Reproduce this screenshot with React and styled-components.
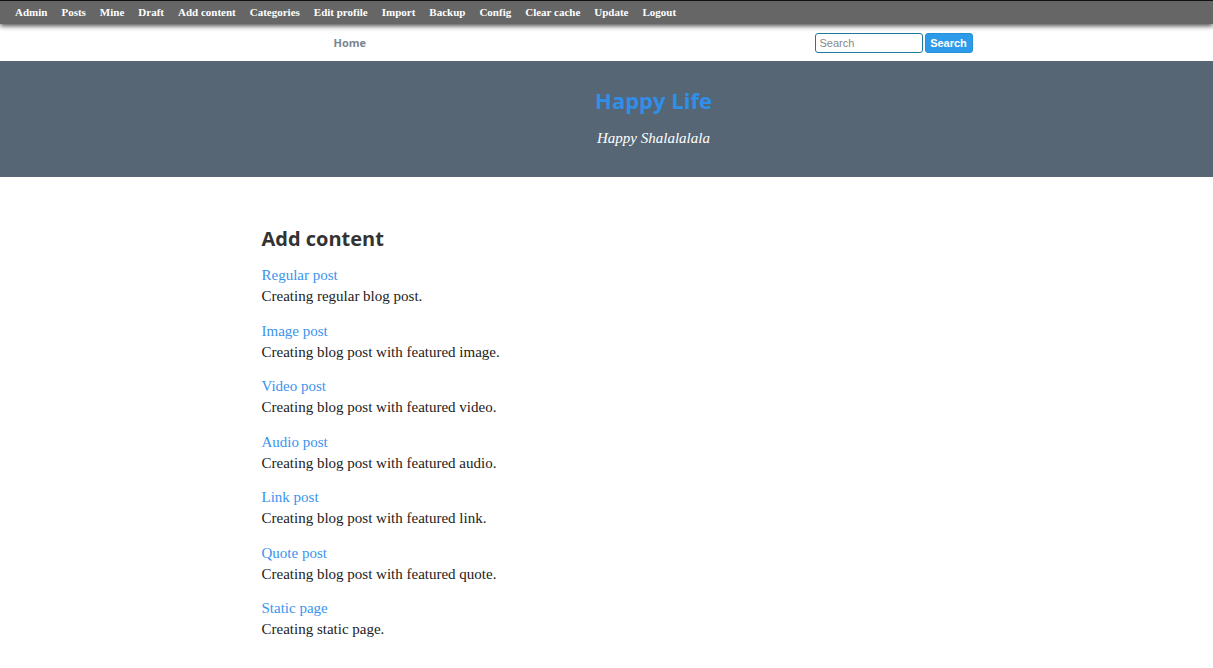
import React from "react";
import styled, { createGlobalStyle } from "styled-components";

const Global = createGlobalStyle`
  html, body { margin: 0; padding: 0; background: #fff; }
  body { font-family: "Liberation Serif", Georgia, serif; }
`;

const TopBar = styled.div`
  height: 24px;
  box-sizing: border-box;
  padding-bottom: 2px;
  border-top: 1px solid #111;
  background: #666;
  box-shadow: 0 2px 5px rgba(0,0,0,0.7);
  display: flex;
  align-items: center;
  gap: 14px;
  padding-left: 15px;
  position: relative;
  z-index: 2;
`;

const TopLink = styled.a`
  font-family: "Liberation Serif", Georgia, serif;
  font-weight: bold;
  font-size: 11px;
  color: #fff;
  text-decoration: none;
  white-space: nowrap;
`;

const NavBar = styled.div`
  height: 37px;
  background: #fff;
`;

const NavInner = styled.div`
  width: 639px;
  margin-left: calc(50% - 273px);
  height: 100%;
  display: flex;
  align-items: center;
  justify-content: space-between;
`;

const NavLink = styled.a`
  font-family: "Open Sans", sans-serif;
  font-weight: bold;
  font-size: 11px;
  color: #7a8590;
  text-decoration: none;
`;

const SearchForm = styled.form`
  display: flex;
  gap: 2px;
  margin: 0;
`;

const SearchInput = styled.input`
  box-sizing: border-box;
  width: 108px;
  height: 20px;
  border: 1px solid #1c7a9c;
  border-radius: 3px;
  padding: 0 4px;
  font-family: "Liberation Sans", Arial, sans-serif;
  font-size: 11px;
  color: #333;
  outline: none;
  &::placeholder { color: #888; }
`;

const SearchButton = styled.button`
  box-sizing: border-box;
  width: 48px;
  height: 20px;
  border: 1px solid #2590d8;
  border-radius: 3px;
  background: #2d9be9;
  color: #fff;
  font-family: "Liberation Sans", Arial, sans-serif;
  font-weight: bold;
  font-size: 11px;
  padding: 0;
`;

const Header = styled.header`
  height: 116px;
  background: #566675;
  display: flex;
  flex-direction: column;
  align-items: center;
  padding-left: 94px;
  box-sizing: border-box;
  padding-top: 24px;
`;

const SiteTitle = styled.h1`
  margin: 0;
  font-family: "Open Sans", sans-serif;
  font-weight: bold;
  font-size: 22px;
  line-height: 30px;
  color: #2f8fea;
`;

const SiteTagline = styled.p`
  margin: 13px 0 0;
  font-family: "Liberation Serif", Georgia, serif;
  font-style: italic;
  font-size: 15px;
  line-height: 20px;
  color: #fff;
`;

const Main = styled.main`
  width: 690px;
  margin: 0 auto;
  padding-top: 48px;
`;

const PageTitle = styled.h2`
  margin: 0 0 12px;
  font-family: "Open Sans", sans-serif;
  font-weight: bold;
  font-size: 20px;
  line-height: 28px;
  color: #333;
`;

const Item = styled.div`
  margin-bottom: 13.5px;
`;

const ItemLink = styled.a`
  display: block;
  font-family: "Liberation Serif", Georgia, serif;
  font-size: 15px;
  line-height: 21px;
  color: #3a94ee;
  text-decoration: none;
`;

const ItemDesc = styled.div`
  font-family: "Liberation Serif", Georgia, serif;
  font-size: 15px;
  line-height: 21px;
  color: #222;
`;

const menu = ["Admin", "Posts", "Mine", "Draft", "Add content", "Categories", "Edit profile", "Import", "Backup", "Config", "Clear cache", "Update", "Logout"];

const items = [
  ["Regular post", "Creating regular blog post."],
  ["Image post", "Creating blog post with featured image."],
  ["Video post", "Creating blog post with featured video."],
  ["Audio post", "Creating blog post with featured audio."],
  ["Link post", "Creating blog post with featured link."],
  ["Quote post", "Creating blog post with featured quote."],
  ["Static page", "Creating static page."],
];

export default function App() {
  return (
    <>
      <Global />
      <TopBar>
        {menu.map((m) => (
          <TopLink key={m} href="#">{m}</TopLink>
        ))}
      </TopBar>
      <NavBar>
        <NavInner>
          <NavLink href="#">Home</NavLink>
          <SearchForm onSubmit={(e) => e.preventDefault()}>
            <SearchInput placeholder="Search" />
            <SearchButton type="submit">Search</SearchButton>
          </SearchForm>
        </NavInner>
      </NavBar>
      <Header>
        <SiteTitle>Happy Life</SiteTitle>
        <SiteTagline>Happy Shalalalala</SiteTagline>
      </Header>
      <Main>
        <PageTitle>Add content</PageTitle>
        {items.map(([t, d]) => (
          <Item key={t}>
            <ItemLink href="#">{t}</ItemLink>
            <ItemDesc>{d}</ItemDesc>
          </Item>
        ))}
      </Main>
    </>
  );
}
